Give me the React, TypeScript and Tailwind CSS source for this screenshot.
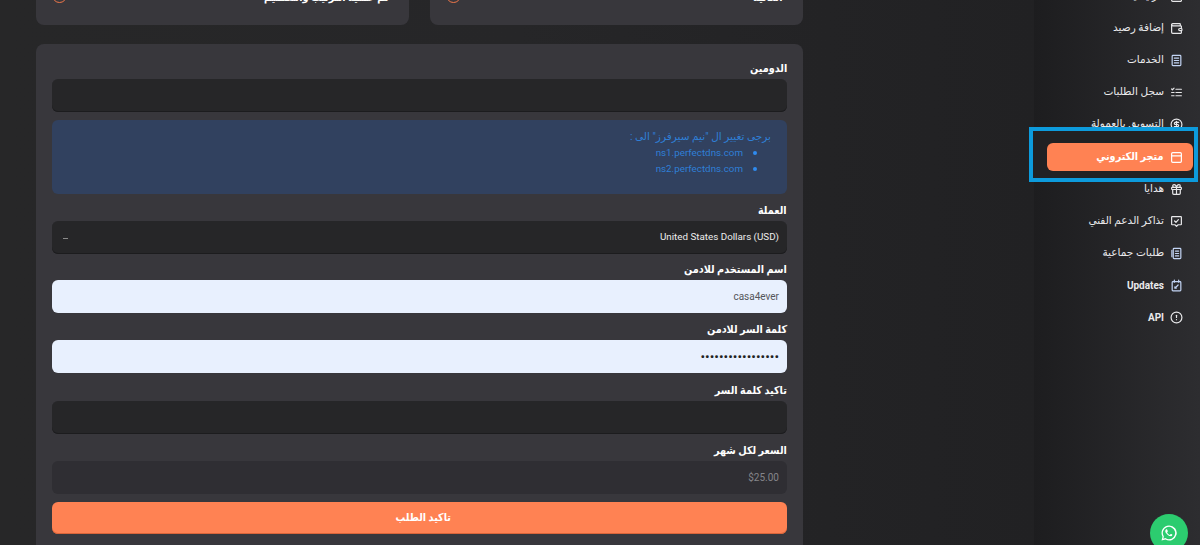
import React from "react";
import { Wallet, CircleDollarSign, PanelTop, Gift, CircleAlert } from "lucide-react";

const font = "font-['Roboto','DejaVu_Sans',sans-serif]";

type IconProps = { size?: number; strokeWidth?: number; className?: string };

function Svg({ size = 13, strokeWidth = 2.200, className = "", children }: IconProps & { children: React.ReactNode }) {
  return (
    <svg viewBox="0 0 24 24" width={size} height={size} fill="none" stroke="currentColor" strokeWidth={strokeWidth} strokeLinecap="round" strokeLinejoin="round" className={className}>
      {children}
    </svg>
  );
}

function ChatCheck(p: IconProps) {
  return (
    <Svg {...p}>
      <path d="M4 3h16a1 1 0 0 1 1 1v13a1 1 0 0 1-1 1h-5l-3 3-3-3H4a1 1 0 0 1-1-1V4a1 1 0 0 1 1-1z" />
      <path d="M8.500 11l2.500 2.500 4.500-5" />
    </Svg>
  );
}

function Sheet(p: IconProps) {
  return (
    <Svg {...p}>
      <rect x="4" y="2.500" width="16" height="19" rx="1.500" />
      <path d="M8 7.500h8M8 12h8M8 16.500h8" />
    </Svg>
  );
}

function BulkSheet(p: IconProps) {
  return (
    <Svg {...p}>
      <rect x="6" y="2.500" width="14" height="19" rx="1.500" />
      <path d="M3.500 6v12M10 7.500h6M10 12h6M10 16.500h6" />
    </Svg>
  );
}

function OrderList(p: IconProps) {
  return (
    <Svg {...p}>
      <path d="M11 6h10M11 12h10M11 18h10" />
      <path d="M3 5.500l1.500 1.500L7.500 4M3 12h4.500M3 18h4.500" />
    </Svg>
  );
}

function CalendarEdit(p: IconProps) {
  return (
    <Svg {...p}>
      <rect x="4" y="5" width="16" height="17" rx="1.500" />
      <path d="M8 2v4M16 2v4M9 17l6-6M9 17h2.500M9 17v-2.500" />
    </Svg>
  );
}

function Ar({ children, cls = "" }: { children: React.ReactNode; cls?: string }) {
  return <span dir="rtl" className={`inline-block origin-right scale-x-[0.88] whitespace-nowrap ${cls}`}>{children}</span>;
}

function NavItem({ label, I, blue, latin }: { label: string; I: any; blue?: boolean; latin?: boolean }) {
  return (
    <div className={`flex h-[32px] items-center justify-end gap-[6px] pr-[17px] text-[#eaeaec] ${latin ? "text-[10px] font-bold" : "text-[10.5px] font-medium"}`}>
      <span dir="rtl" className="whitespace-nowrap">{label}</span>
      <span className="flex w-[13px] justify-center">
        <I size={13} strokeWidth={2.200} className={blue ? "text-[#c3d5f5]" : "text-[#e8e8ea]"} />
      </span>
    </div>
  );
}

function Label({ children }: { children: React.ReactNode }) {
  return (
    <div dir="rtl" className="mb-[3px] h-[16px] pt-[1px] text-[11px] font-bold leading-[16px] text-white">
      <Ar>{children}</Ar>
    </div>
  );
}

function Field({ label, value, cls, mb = "mb-[8px]" }: { label: string; value?: string; cls: string; mb?: string }) {
  return (
    <div className={mb}>
      <Label>{label}</Label>
      <div className={`flex h-[33px] items-center justify-end rounded-[6px] px-[8px] text-[10px] ${cls}`}>{value}</div>
    </div>
  );
}

function TopCard({ text }: { text: string }) {
  return (
    <div className="flex h-[60px] w-[373px] items-start justify-between rounded-[8px] bg-[#38373c] pl-[16px] pr-[20px] pt-[23px]">
      <span className="h-[15px] w-[15px] rounded-full border-[1.5px] border-[#f0774a]" />
      <span className="mt-[2px] text-[11px] font-bold leading-[16px] text-white"><Ar>{text}</Ar></span>
    </div>
  );
}

export default function App() {
  return (
    <div className={`relative flex h-[545px] w-[1200px] overflow-hidden bg-[#262628] ${font}`}>
      <main className="w-[1034px] shrink-0 bg-gradient-to-r from-[#272728] via-[#262628] to-[#212123] pl-[36px]">
        <div className="-mt-[35px] flex w-[767px] justify-between">
          <TopCard text="تم عملية الترتيب والتصميم" />
          <TopCard text="العالية" />
        </div>
        <section className="mt-[19px] h-[560px] w-[767px] rounded-[8px] bg-[#38373c] px-[16px] pt-[16px]">
          <Field label="الدومين" cls="bg-[#262628] shadow-[inset_0_-1px_0_#1c1c1e]" />
          <div className="mb-[8px] h-[74px] rounded-[6px] bg-[#31415f] pr-[16px] pt-[9px] text-[10.5px] leading-[16px] text-[#2f7fd6]">
            <div dir="rtl">برجى تغيير ال "نيم سيرفرز" الى :</div>
            <ul dir="ltr" className="flex flex-col items-end pr-[14px] text-[9.8px]">
              <li className="flex items-center gap-[10px]">ns1.perfectdns.com<span className="h-[4px] w-[4px] rounded-full bg-[#2f8bf0]" /></li>
              <li className="flex items-center gap-[10px]">ns2.perfectdns.com<span className="h-[4px] w-[4px] rounded-full bg-[#2f8bf0]" /></li>
            </ul>
          </div>
          <div className="mb-[7px]">
            <Label>العملة</Label>
            <div className="flex h-[33px] items-center justify-between rounded-[6px] bg-[#262628] px-[8px] text-[9.8px] text-[#ececec] shadow-[inset_0_-1px_0_#1c1c1e]">
              <span className="ml-[3px] mt-[1px] h-px w-[5px] bg-[#8a8a8a]" />
              <span>United States Dollars (USD)</span>
            </div>
          </div>
          <Field label="اسم المستخدم للادمن" value="casa4ever" cls="bg-[#e8f0fe] text-[#55565a]" />
          <Field label="كلمة السر للادمن" value="•••••••••••••••••" cls="bg-[#e8f0fe] !text-[13.7px] text-[#222]" mb="mb-[9px]" />
          <Field label="تاكيد كلمة السر" cls="bg-[#262628] shadow-[inset_0_-1px_0_#1c1c1e]" />
          <Field label="السعر لكل شهر" value="$25.00" cls="bg-[#2f2e33] text-[#85858a]" />
          <button className="flex h-[32px] w-full items-center justify-center rounded-[6px] bg-[#ff8253] text-[11px] font-bold text-white shadow-[inset_0_-1px_0_#d9653a]">
            <Ar cls="origin-center">تاكيد الطلب</Ar>
          </button>
        </section>
      </main>

      <aside className="w-[166px] shrink-0 bg-gradient-to-r from-[#1d1d1f] to-[#2d2d30]">
        <div className="-mt-[20px]">
          <NavItem label="الرئيسية" I={Wallet} />
          <NavItem label="إضافة رصيد" I={Wallet} />
          <NavItem label="الخدمات" I={Sheet} blue />
          <NavItem label="سجل الطلبات" I={OrderList} />
          <NavItem label="التسويق بالعمولة" I={CircleDollarSign} />
          <div className="relative z-20 mb-[2px] ml-[13px] mr-[7px] mt-[3px] flex h-[28px] items-center justify-end gap-[6px] rounded-[6px] bg-[#ff8253] pr-[10px] text-[11px] font-bold text-white">
            <Ar>متجر الكتروني</Ar>
            <PanelTop size={13} strokeWidth={2.200} />
          </div>
          <NavItem label="هدايا" I={Gift} />
          <NavItem label="تذاكر الدعم الفني" I={ChatCheck} />
          <NavItem label="طلبات جماعية" I={BulkSheet} blue />
          <NavItem label="Updates" I={CalendarEdit} blue latin />
          <NavItem label="API" I={CircleAlert} latin />
        </div>
      </aside>

      <div className="absolute left-[1029px] top-[127px] z-10 h-[55px] w-[169px] border-[4px] border-[#0d9bdc] bg-[#212123]" />

      <div className="absolute left-[1150px] top-[514px] z-30 flex h-[38px] w-[38px] items-center justify-center rounded-full bg-[#2ccc6f]">
        <svg viewBox="0 0 24 24" width="18" height="18" fill="#fff">
          <path d="M12 2a10 10 0 0 0-8.600 15l-1.400 5 5.200-1.400A10 10 0 1 0 12 2zm0 18.200a8.200 8.200 0 0 1-4.300-1.200l-.3-.2-3 .8.8-3-.2-.3A8.200 8.200 0 1 1 12 20.200zm4.500-6.100c-.2-.1-1.500-.7-1.700-.8-.2-.1-.4-.1-.6.1l-.8 1c-.1.2-.3.2-.5.1-.7-.3-1.400-.7-2-1.300-.6-.5-1-1.100-1.400-1.800-.1-.2 0-.4.1-.5l.6-.7c.1-.2.1-.3.2-.5v-.4l-.8-1.800c-.2-.5-.4-.4-.6-.4h-.5c-.2 0-.4.1-.6.3-.6.6-.9 1.300-.9 2.100.1.900.4 1.800 1 2.600 1 1.500 2.300 2.700 3.900 3.500.5.200.9.400 1.400.500.500.200 1 .200 1.500.100.600-.100 1.100-.500 1.400-1 .200-.400.200-.800.100-1.200-.1-.100-.200-.100-.400-.200z" />
        </svg>
      </div>
    </div>
  );
}
